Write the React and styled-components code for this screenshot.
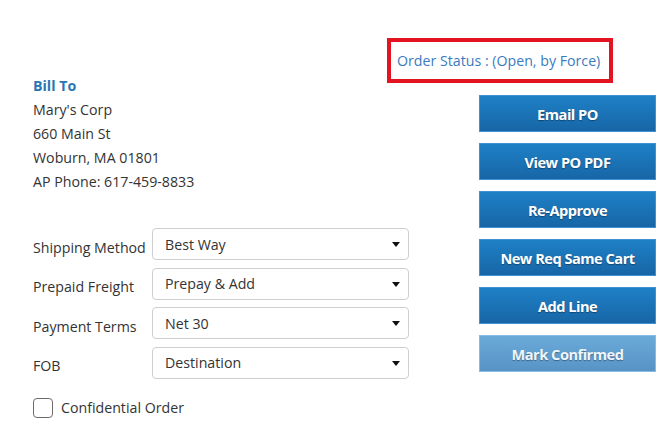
import React from 'react';
import styled, { createGlobalStyle } from 'styled-components';

const GlobalStyle = createGlobalStyle`
  body {
    margin: 0;
    background: #fff;
    font-family: "Open Sans", "Liberation Sans", sans-serif;
    font-size: 14.2px;
    color: #333;
  }
`;

const Page = styled.div`
  display: flex;
  width: 670px;
  height: 434px;
  box-sizing: border-box;
  padding-left: 33px;
`;

const Left = styled.div`
  width: 376px;
  padding-top: 74px;
`;

const Right = styled.div`
  display: flex;
  flex-direction: column;
  align-items: flex-start;
  margin-left: 70px;
  padding-top: 38px;
`;

const StatusBox = styled.div`
  margin-left: -92px;
  width: 226px;
  height: 45px;
  box-sizing: border-box;
  border: 4px solid #e3131f;
  display: flex;
  align-items: center;
  padding-left: 6px;
  color: #3a7bbf;
  margin-bottom: 12px;
`;

const Address = styled.div`
  line-height: 24px;
`;

const Heading = styled.div`
  color: #2a76b4;
  font-weight: 700;
`;

const Form = styled.div`
  display: flex;
  flex-direction: column;
  gap: 7.5px;
  margin-top: 34px;
`;

const Row = styled.div`
  display: flex;
  align-items: center;
`;

const Label = styled.label`
  width: 119px;
  padding-top: 6px;
`;

const SelectWrap = styled.div`
  position: relative;
  width: 257px;
  height: 32px;

  &::after {
    content: '';
    position: absolute;
    right: 9px;
    top: 14px;
    border-left: 4.5px solid transparent;
    border-right: 4.5px solid transparent;
    border-top: 5px solid #111;
    pointer-events: none;
  }
`;

const Select = styled.select`
  appearance: none;
  width: 100%;
  height: 100%;
  box-sizing: border-box;
  border: 1px solid #cfcfcf;
  border-radius: 4px;
  background: #fff;
  padding: 0 24px 0 12px;
  font-family: inherit;
  font-size: 14.2px;
  color: #333;
  outline: none;
`;

const CheckRow = styled.label`
  display: flex;
  align-items: center;
  gap: 8px;
  margin-top: 19px;
`;

const Box = styled.span`
  width: 20px;
  height: 20px;
  box-sizing: border-box;
  border: 1px solid #6b6b6b;
  border-radius: 4px;
  background: #fff;
`;

const Buttons = styled.div`
  display: flex;
  flex-direction: column;
  gap: 11px;
`;

const Button = styled.button`
  width: 177px;
  height: 37px;
  box-sizing: border-box;
  border: 1px solid ${p => (p.disabled ? '#86bbe2' : '#3f91d2')};
  background: ${p =>
    p.disabled
      ? 'linear-gradient(#6aaad9, #5893c5)'
      : 'linear-gradient(#1f80c6, #1766a6)'};
  color: ${p => (p.disabled ? '#eef5fb' : '#fff')};
  font-family: "Open Sans", "Liberation Sans", sans-serif;
  font-size: 14.6px;
  font-weight: 700;
  letter-spacing: -0.5px;
  text-shadow: 0 1px 1px rgba(0, 0, 0, 0.35);
  padding: 0;
`;

const fields = [
  ['Shipping Method', 'Best Way'],
  ['Prepaid Freight', 'Prepay & Add'],
  ['Payment Terms', 'Net 30'],
  ['FOB', 'Destination'],
];

const actions = ['Email PO', 'View PO PDF', 'Re-Approve', 'New Req Same Cart', 'Add Line'];

export default function App() {
  return (
    <>
      <GlobalStyle />
      <Page>
        <Left>
          <Address>
            <Heading>Bill To</Heading>
            <div>Mary's Corp</div>
            <div>660 Main St</div>
            <div>Woburn, MA 01801</div>
            <div>AP Phone: 617-459-8833</div>
          </Address>
          <Form>
            {fields.map(([label, value]) => (
              <Row key={label}>
                <Label>{label}</Label>
                <SelectWrap>
                  <Select defaultValue={value}>
                    <option>{value}</option>
                  </Select>
                </SelectWrap>
              </Row>
            ))}
          </Form>
          <CheckRow>
            <Box />
            Confidential Order
          </CheckRow>
        </Left>
        <Right>
          <StatusBox>Order Status : (Open, by Force)</StatusBox>
          <Buttons>
            {actions.map(a => (
              <Button key={a}>{a}</Button>
            ))}
            <Button disabled>Mark Confirmed</Button>
          </Buttons>
        </Right>
      </Page>
    </>
  );
}
